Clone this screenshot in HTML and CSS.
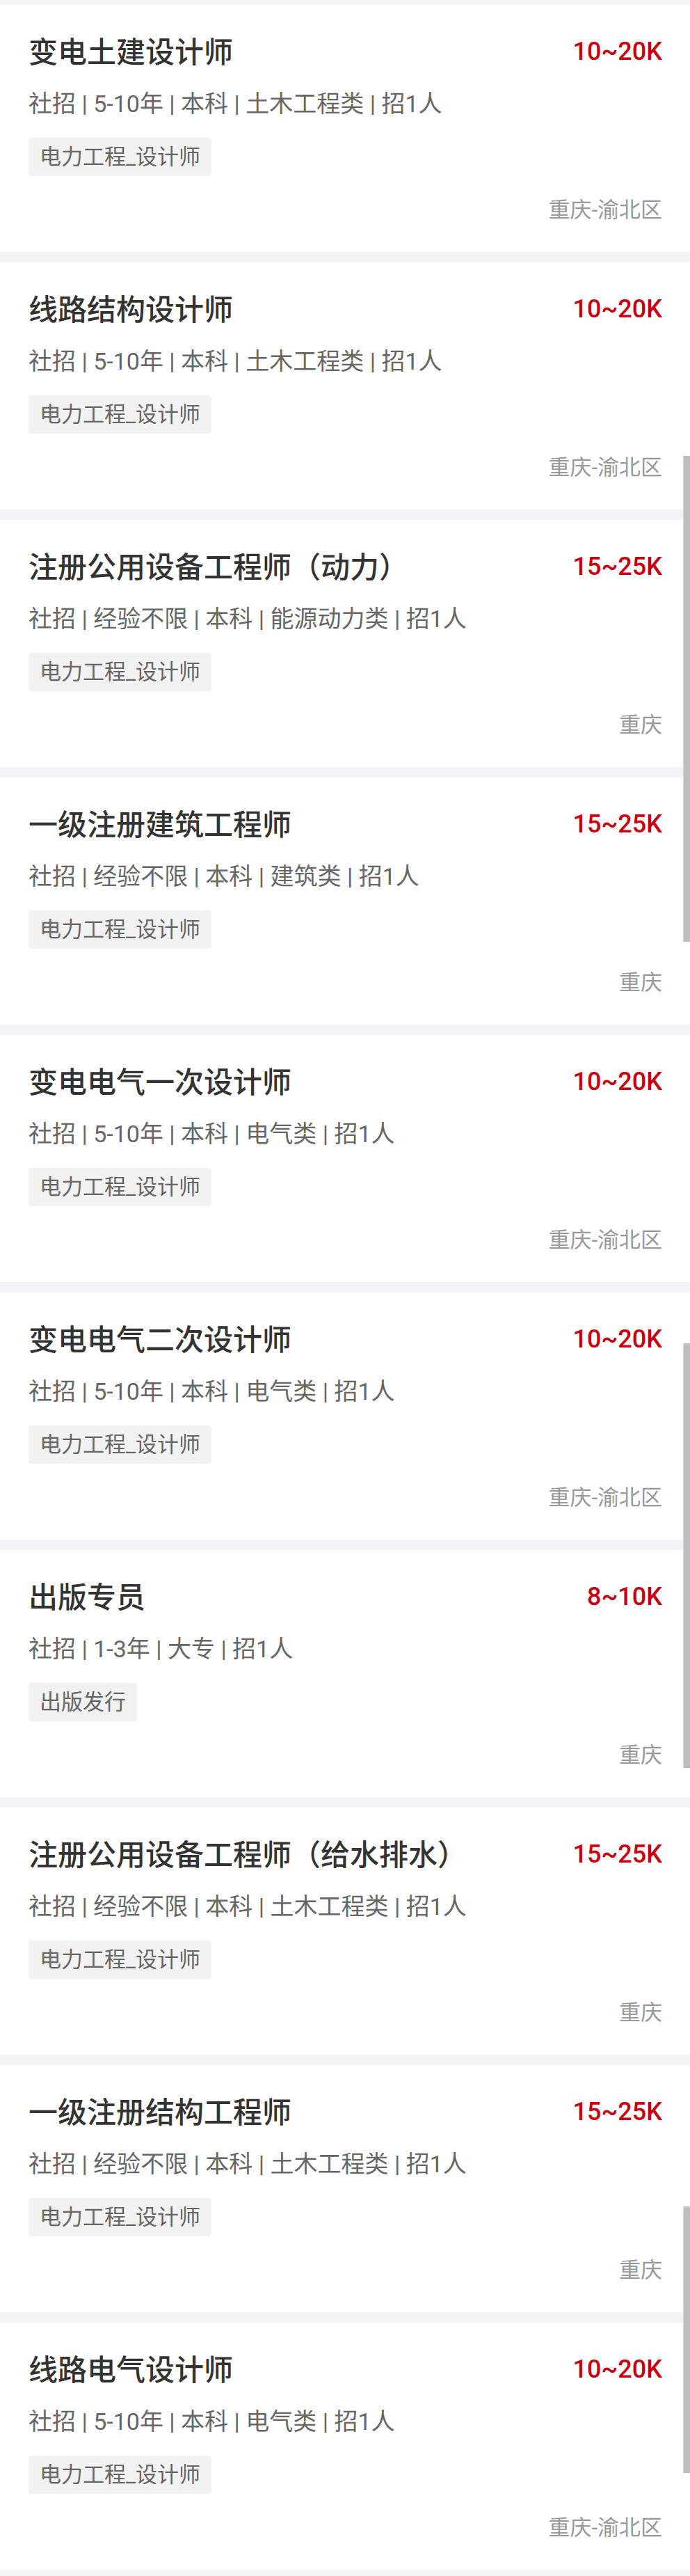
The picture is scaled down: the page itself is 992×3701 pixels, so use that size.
FILE: index.html
```html
<!DOCTYPE html>
<html lang="zh-CN">
<head>
    <meta charset="UTF-8">
    <meta name="viewport" content="width=device-width, initial-scale=1.0">
    <title>职位列表</title>
    <link rel="stylesheet" href="styles.css">
</head>
<body>
    <!-- 职位列表 -->
    <div class="job-list">
        <div class="job">
            <div class="job-head"><h3>变电土建设计师</h3><span class="salary">10~20K</span></div>
            <p class="job-meta">社招 | 5-10年 | 本科 | 土木工程类 | 招1人</p>
            <div class="tags"><span class="tag">电力工程_设计师</span></div>
            <p class="job-city">重庆-渝北区</p>
        </div>
        <div class="job">
            <div class="job-head"><h3>线路结构设计师</h3><span class="salary">10~20K</span></div>
            <p class="job-meta">社招 | 5-10年 | 本科 | 土木工程类 | 招1人</p>
            <div class="tags"><span class="tag">电力工程_设计师</span></div>
            <p class="job-city">重庆-渝北区</p>
        </div>
        <div class="job">
            <div class="job-head"><h3>注册公用设备工程师（动力）</h3><span class="salary">15~25K</span></div>
            <p class="job-meta">社招 | 经验不限 | 本科 | 能源动力类 | 招1人</p>
            <div class="tags"><span class="tag">电力工程_设计师</span></div>
            <p class="job-city">重庆</p>
        </div>
        <div class="job">
            <div class="job-head"><h3>一级注册建筑工程师</h3><span class="salary">15~25K</span></div>
            <p class="job-meta">社招 | 经验不限 | 本科 | 建筑类 | 招1人</p>
            <div class="tags"><span class="tag">电力工程_设计师</span></div>
            <p class="job-city">重庆</p>
        </div>
        <div class="job">
            <div class="job-head"><h3>变电电气一次设计师</h3><span class="salary">10~20K</span></div>
            <p class="job-meta">社招 | 5-10年 | 本科 | 电气类 | 招1人</p>
            <div class="tags"><span class="tag">电力工程_设计师</span></div>
            <p class="job-city">重庆-渝北区</p>
        </div>
        <div class="job">
            <div class="job-head"><h3>变电电气二次设计师</h3><span class="salary">10~20K</span></div>
            <p class="job-meta">社招 | 5-10年 | 本科 | 电气类 | 招1人</p>
            <div class="tags"><span class="tag">电力工程_设计师</span></div>
            <p class="job-city">重庆-渝北区</p>
        </div>
        <div class="job">
            <div class="job-head"><h3>出版专员</h3><span class="salary">8~10K</span></div>
            <p class="job-meta">社招 | 1-3年 | 大专 | 招1人</p>
            <div class="tags"><span class="tag">出版发行</span></div>
            <p class="job-city">重庆</p>
        </div>
        <div class="job">
            <div class="job-head"><h3>注册公用设备工程师（给水排水）</h3><span class="salary">15~25K</span></div>
            <p class="job-meta">社招 | 经验不限 | 本科 | 土木工程类 | 招1人</p>
            <div class="tags"><span class="tag">电力工程_设计师</span></div>
            <p class="job-city">重庆</p>
        </div>
        <div class="job">
            <div class="job-head"><h3>一级注册结构工程师</h3><span class="salary">15~25K</span></div>
            <p class="job-meta">社招 | 经验不限 | 本科 | 土木工程类 | 招1人</p>
            <div class="tags"><span class="tag">电力工程_设计师</span></div>
            <p class="job-city">重庆</p>
        </div>
        <div class="job">
            <div class="job-head"><h3>线路电气设计师</h3><span class="salary">10~20K</span></div>
            <p class="job-meta">社招 | 5-10年 | 本科 | 电气类 | 招1人</p>
            <div class="tags"><span class="tag">电力工程_设计师</span></div>
            <p class="job-city">重庆-渝北区</p>
        </div>
    </div>

    <!-- 滚动条（截图拼接留下的） -->
    <div class="scroll-thumb thumb-1"></div>
    <div class="scroll-thumb thumb-2"></div>
    <div class="scroll-thumb thumb-3"></div>
</body>
</html>
```
FILE: styles.css
```css
body { font-family: Roboto, "Noto Sans CJK SC", sans-serif; margin: 0; padding: 7px 0 0; background-color: #f4f4f8; position: relative; }
.job-list { display: flex; flex-direction: column; gap: 15px; }
.job { background-color: #fff; height: 355px; box-sizing: border-box; padding: 41px 40px 0 41px; }
.job-head { display: flex; justify-content: space-between; align-items: center; height: 56px; }
.job h3 { margin: 0; font-size: 42px; line-height: 56px; font-weight: 500; color: #333; }
.salary { font-size: 36px; font-weight: 500; color: #c8000f; margin-top: -4px; }
.job-meta { margin: 23px 0 0; font-size: 34px; line-height: 44px; color: #666; }
.tags { display: flex; margin-top: 27px; }
.tag { height: 55px; line-height: 55px; padding: 0 16px; font-size: 31px; color: #666; background-color: #f2f2f2; border-radius: 4px; }
.job-city { margin: 29px 0 0; text-align: right; font-size: 31px; line-height: 40px; color: #999; }
.scroll-thumb { position: absolute; right: 0; width: 9px; background-color: #bdbdbd; border-left: 1px solid #d6d6d6; }
.thumb-1 { top: 655px; height: 698px; }
.thumb-2 { top: 1930px; height: 610px; }
.thumb-3 { top: 3170px; height: 383px; }
```
